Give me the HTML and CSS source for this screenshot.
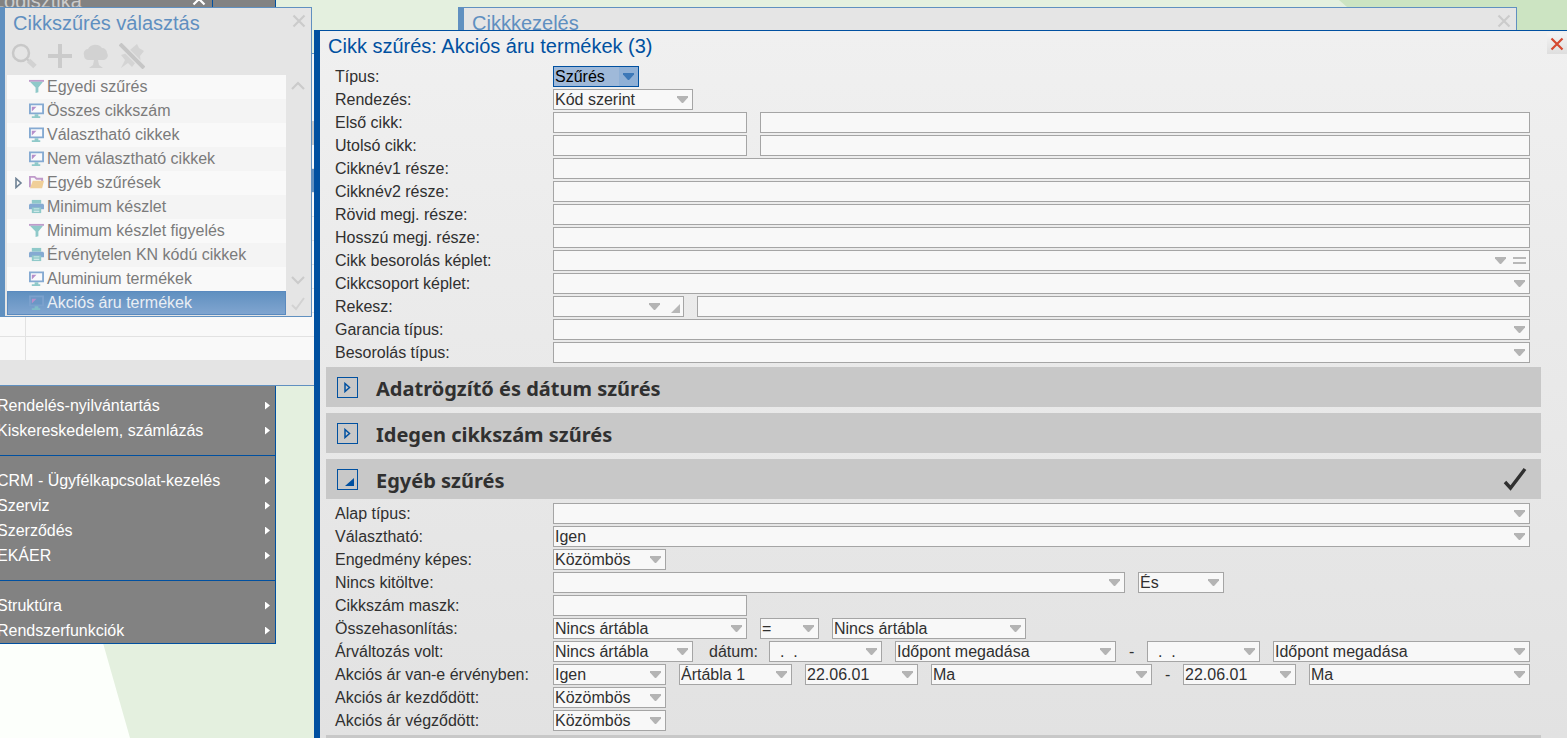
FILE: index.html
```html
<!DOCTYPE html>
<html lang="hu">
<head>
<meta charset="utf-8">
<title>Cikk szűrés</title>
<link rel="stylesheet" href="styles.css">
</head>
<body>
<svg class="defs" aria-hidden="true">
  <symbol id="cross" viewBox="0 0 14 14"><path d="M1.5 1.5L12.5 12.5M12.5 1.5L1.5 12.5" fill="none" stroke="currentColor" stroke-width="2.2"/></symbol>
  <symbol id="funnel" viewBox="0 0 16 16"><path d="M0 1h16v2H0z" fill="#bf9bcb"/><path d="M1 3h14L10 9v5l-3 1V9z" fill="#8fc9c9"/></symbol>
  <symbol id="screen" viewBox="0 0 16 16"><path d="M1 1.500h14v9.500H1z" fill="#f9f9fb" stroke="#85aad2" stroke-width="2"/><path d="M3 4h5L3 9z" fill="#b58fcb"/><path d="M6 12h4v2h2v2H3v-2h3z" fill="#8fc9c9"/></symbol>
  <symbol id="screen-sel" viewBox="0 0 16 16"><path d="M1 1.500h14v9.500H1z" fill="#6b97c5" stroke="#7ba1cd" stroke-width="2"/><path d="M3 4h5L3 9z" fill="#b58fcb"/><path d="M6 12h4v2h2v2H3v-2h3z" fill="#7fbcc9"/></symbol>
  <symbol id="folder" viewBox="0 0 16 16"><path d="M1 13V2h5l2 2h6v3" fill="none" stroke="#c09bca" stroke-width="2"/><path d="M4 6h12l-2 8H1z" fill="#f0cf98"/></symbol>
  <symbol id="printer" viewBox="0 0 16 16"><path d="M3 1h10v4H3z" fill="#8fc9c9"/><path d="M1 5h14l1 1v5H0V6z" fill="#85aad2"/><path d="M3 9h10v6H3z" fill="#8fc9c9"/><path d="M5 10h6v1H5zM5 12.500h6v1H5z" fill="#e2f2f2"/></symbol>
</svg>
<div class="desktop">
  <div class="shape shape-white"></div>
  <div class="shape shape-green"></div>

  <nav class="menu">
    <div class="menu-head"><span>Logisztika</span><span class="menu-close"><svg width="14" height="14"><use href="#cross"/></svg></span></div>
    <ul><li><a href="#">Rendelés-nyilvántartás</a></li><li><a href="#">Kiskereskedelem, számlázás</a></li></ul>
    <ul><li><a href="#">CRM - Ügyfélkapcsolat-kezelés</a></li><li><a href="#">Szerviz</a></li><li><a href="#">Szerződés</a></li><li><a href="#">EKÁER</a></li></ul>
    <ul><li><a href="#">Struktúra</a></li><li><a href="#">Rendszerfunkciók</a></li></ul>
  </nav>

  <section class="backgrid">
    <div class="backgrid-title"></div><div class="backgrid-head"></div>
    <div class="backgrid-rows"><div class="backgrid-selected"></div></div>
  </section>

  <section class="window items">
    <header class="window-title"><h2>Cikkkezelés</h2><button class="close" aria-label="Bezárás"><svg width="14" height="14"><use href="#cross"/></svg></button></header>
  </section>

  <section class="window picker">
    <header class="window-title"><h2>Cikkszűrés választás</h2><button class="close" aria-label="Bezárás"><svg width="14" height="14"><use href="#cross"/></svg></button></header>
    <div class="tools">
      <button aria-label="Keresés"><svg width="26" height="26" viewBox="0 0 26 26"><circle cx="10" cy="10" r="8" fill="none" stroke="#c8c8c8" stroke-width="2.500"/><path d="M15 15l3 3" stroke="#c8c8c8" stroke-width="2"/><path d="M17.500 17.500l6.500 6" stroke="#d2d2d2" stroke-width="5"/></svg></button>
      <button aria-label="Új"><svg width="26" height="26" viewBox="0 0 26 26"><path d="M13 1v24M1 13h24" stroke="#cbcbcb" stroke-width="4"/></svg></button>
      <button aria-label="Fa"><svg width="26" height="26" viewBox="0 0 26 26"><path d="M5 17a5 5 0 01-4-5 4.500 4.500 0 014-6 8 7 0 0114-1 5 5 0 015 5 4.500 4.500 0 01-3 7h-6l1 5 4 3H6l4-3 1-5z" fill="#d2d2d2"/></svg></button>
      <button aria-label="Rögzítés törlése"><svg width="26" height="26" viewBox="0 0 26 26"><path d="M12 6l6-5 2 4 5 3-4 5 1 7-5-1-4 5-4-4-7 5 4-8-4-5 6-2z" fill="#d4d4d4"/><path d="M2 2l22 22" stroke="#e5e5e5" stroke-width="6"/><path d="M1 1l24 24" stroke="#c6c6c6" stroke-width="4"/></svg></button>
    </div>
    <div class="picker-body">
      <ul class="tree">
        <li><svg><use href="#funnel"/></svg>Egyedi szűrés</li>
        <li><svg><use href="#screen"/></svg>Összes cikkszám</li>
        <li><svg><use href="#screen"/></svg>Választható cikkek</li>
        <li><svg><use href="#screen"/></svg>Nem választható cikkek</li>
        <li class="branch"><svg class="expander" viewBox="0 0 8 12"><path d="M1 1.500v9L6 6z" fill="#f9f9f9" stroke="#6f8295" stroke-width="1.600"/></svg><svg><use href="#folder"/></svg>Egyéb szűrések</li>
        <li><svg><use href="#printer"/></svg>Minimum készlet</li>
        <li><svg><use href="#funnel"/></svg>Minimum készlet figyelés</li>
        <li><svg><use href="#printer"/></svg>Érvénytelen KN kódú cikkek</li>
        <li><svg><use href="#screen"/></svg>Aluminium termékek</li>
        <li class="selected"><svg><use href="#screen-sel"/></svg>Akciós áru termékek</li>
      </ul>
      <div class="scroll">
        <button aria-label="Fel"><svg width="14" height="9" viewBox="0 0 14 9"><path d="M1 8l6-6 6 6" fill="none" stroke="#cbcbcb" stroke-width="2.200"/></svg></button>
        <span class="scroll-end">
        <button aria-label="Le"><svg width="14" height="9" viewBox="0 0 14 9"><path d="M1 1l6 6 6-6" fill="none" stroke="#cbcbcb" stroke-width="2.200"/></svg></button>
        <button aria-label="Kiválaszt"><svg width="14" height="14" viewBox="0 0 14 14"><path d="M1 8l4 4 8-11" fill="none" stroke="#d2d2d2" stroke-width="2"/></svg></button>
        </span>
      </div>
    </div>
  </section>

  <main class="window filter">
    <header class="window-title"><h1>Cikk szűrés: Akciós áru termékek (3)</h1><button class="close" aria-label="Bezárás"><svg width="14" height="14"><use href="#cross"/></svg></button></header>
    <form>
      <div class="rows">
        <div class="row"><label for="tipus">Típus:</label><span class="combo w-s focused"><select id="tipus"><option>Szűrés</option></select></span></div>
        <div class="row"><label for="rend">Rendezés:</label><span class="combo w-l"><select id="rend"><option>Kód szerint</option></select></span></div>
        <div class="row"><label for="elso">Első cikk:</label><input id="elso" class="w-xl"><input class="grow" aria-label="Első cikk neve"></div>
        <div class="row"><label for="utolso">Utolsó cikk:</label><input id="utolso" class="w-xl"><input class="grow" aria-label="Utolsó cikk neve"></div>
        <div class="row"><label for="nev1">Cikknév1 része:</label><input id="nev1" class="grow"></div>
        <div class="row"><label for="nev2">Cikknév2 része:</label><input id="nev2" class="grow"></div>
        <div class="row"><label for="rovid">Rövid megj. része:</label><input id="rovid" class="grow"></div>
        <div class="row"><label for="hosszu">Hosszú megj. része:</label><input id="hosszu" class="grow"></div>
        <div class="row"><label for="besk">Cikk besorolás képlet:</label><span class="combo grow extra"><input id="besk"><svg class="mark" width="13" height="7" viewBox="0 0 13 7"><path d="M0 1h13M0 6h13" stroke="#b8b8b8" stroke-width="2"/></svg></span></div>
        <div class="row"><label for="csop">Cikkcsoport képlet:</label><span class="combo grow"><input id="csop"></span></div>
        <div class="row"><label for="rekesz">Rekesz:</label><span class="combo w-m extra corner"><input id="rekesz"><svg class="mark" width="9" height="9" viewBox="0 0 9 9"><path d="M9 0v9H0z" fill="#b8b8b8"/></svg></span><input class="grow" aria-label="Rekesz neve"></div>
        <div class="row"><label for="gar">Garancia típus:</label><span class="combo grow"><select id="gar"><option></option></select></span></div>
        <div class="row"><label for="best">Besorolás típus:</label><span class="combo grow"><select id="best"><option></option></select></span></div>
      </div>
      <div class="section"><button type="button" aria-label="Kinyit"><svg width="7" height="11" viewBox="0 0 7 11"><path d="M1 1.500v8L5.500 5.500z" fill="none" stroke="#0050a0" stroke-width="1.500"/></svg></button><h2>Adatrögzítő és dátum szűrés</h2></div>
      <div class="section"><button type="button" aria-label="Kinyit"><svg width="7" height="11" viewBox="0 0 7 11"><path d="M1 1.500v8L5.500 5.500z" fill="none" stroke="#0050a0" stroke-width="1.500"/></svg></button><h2>Idegen cikkszám szűrés</h2></div>
      <div class="section open"><button type="button" aria-label="Becsuk"><svg width="9" height="8" viewBox="0 0 9 8"><path d="M9 0v8H0z" fill="#0050a0"/></svg></button><h2>Egyéb szűrés</h2><svg class="tick" width="24" height="24" viewBox="0 0 24 24"><path d="M2 15L7.500 21L22 2" fill="none" stroke="#303030" stroke-width="3.400"/></svg></div>
      <div class="rows">
        <div class="row"><label for="alap">Alap típus:</label><span class="combo grow"><select id="alap"><option></option></select></span></div>
        <div class="row"><label for="val">Választható:</label><span class="combo grow"><select id="val"><option>Igen</option></select></span></div>
        <div class="row"><label for="eng">Engedmény képes:</label><span class="combo w-c"><select id="eng"><option>Közömbös</option></select></span></div>
        <div class="row"><label for="nincs">Nincs kitöltve:</label><span class="combo w-half"><select id="nincs"><option></option></select></span><span class="combo w-s"><select aria-label="Kapcsolat"><option>És</option></select></span></div>
        <div class="row"><label for="maszk">Cikkszám maszk:</label><input id="maszk" class="w-xl"></div>
        <div class="row"><label for="ossz">Összehasonlítás:</label><span class="combo w-xl"><select id="ossz"><option>Nincs ártábla</option></select></span><span class="combo w-xs"><select aria-label="Művelet"><option>=</option></select></span><span class="combo w-xl"><select aria-label="Másik ártábla"><option>Nincs ártábla</option></select></span></div>
        <div class="row"><label for="arv">Árváltozás volt:</label><span class="combo w-l"><select id="arv"><option>Nincs ártábla</option></select></span><label class="inner" for="datum">dátum:</label><span class="combo w-c"><input id="datum" value="  .  ."></span><span class="combo w-t"><select aria-label="Kezdő időpont"><option>Időpont megadása</option></select></span><span class="dash">-</span><span class="combo w-c"><input aria-label="Záró dátum" value="  .  ."></span><span class="combo grow"><select aria-label="Záró időpont"><option>Időpont megadása</option></select></span></div>
        <div class="row"><label for="akc">Akciós ár van-e érvényben:</label><span class="combo w-c"><select id="akc"><option>Igen</option></select></span><span class="combo w-c"><select aria-label="Ártábla"><option>Ártábla 1</option></select></span><span class="combo w-c"><input aria-label="Akció kezdete" value="22.06.01"></span><span class="combo w-t"><select aria-label="Akció kezdő időpont"><option>Ma</option></select></span><span class="dash">-</span><span class="combo w-c"><input aria-label="Akció vége" value="22.06.01"></span><span class="combo grow"><select aria-label="Akció záró időpont"><option>Ma</option></select></span></div>
        <div class="row"><label for="kezd">Akciós ár kezdődött:</label><span class="combo w-c"><select id="kezd"><option>Közömbös</option></select></span></div>
        <div class="row"><label for="vegz">Akciós ár végződött:</label><span class="combo w-c"><select id="vegz"><option>Közömbös</option></select></span></div>
      </div>
      <div class="section"></div>
    </form>
  </main>
</div>
</body>
</html>
```

FILE: styles.css
```css
* { box-sizing: border-box; }
html, body { margin: 0; height: 100%; }
body, input, select, button { font-family: "Liberation Sans", Arial, sans-serif; font-size: 16px; }
body { color: #303030; }
h1, h2, ul { margin: 0; padding: 0; font-weight: normal; list-style: none; }
button { padding: 0; border: 0; background: none; }
svg { display: block; }
.defs { position: absolute; width: 0; height: 0; }

.desktop { position: relative; height: 100vh; overflow: hidden; background: #e4f0df; }
.shape { position: absolute; inset: 0; }
.shape-white { background: #fcfffb; clip-path: polygon(0 0, 0 738px, 130px 738px, 103px 643px, 0 280px); }
.shape-green { background: #cce4c2; clip-path: polygon(1339px 0, 100% 0, 100% 200px, 1567px 200px); }

/* Main menu */
.menu { position: absolute; left: -12px; top: -12px; width: 288px; background: #828282; color: #fff; border: 1px solid #0050a0; border-top: 0; }
.menu-head { display: flex; height: 405px; padding-left: 4px; font-size: 20px; line-height: 26px; color: #ccc; }
.menu-head span:first-child { width: 190px; }
.menu-close { width: 30px; height: 24px; padding: 4px 0 0 9px; border-right: 1px solid #0050a0; color: #fff; }
.menu ul + ul { margin-top: 12px; padding-top: 12px; border-top: 1px solid #0050a0; }
.menu a { display: flex; align-items: center; justify-content: space-between; height: 25px; padding: 0 5px 0 8px; color: inherit; text-decoration: none; }
.menu a::after { content: ""; width: 5px; height: 8px; background: #fff; clip-path: polygon(0 0, 100% 50%, 0 100%); }

/* Grid window at the back */
.backgrid { position: absolute; left: 0; top: 53px; width: 330px; height: 333px; display: flex; flex-direction: column; background: #e4e4e4; border: solid #6090c0; border-width: 1px 0; }
.backgrid-title { height: 67px; background: #f4f4f4; }
.backgrid-head { height: 24px; background: #c8c8c8; }
.backgrid-rows { height: 215px; padding-top: 24px; background: linear-gradient(90deg, transparent 25px, #e2e2e2 25px, #e2e2e2 26px, transparent 26px), repeating-linear-gradient(#f9f9f9 0 23px, #e2e2e2 23px 24px); }
.backgrid-selected { height: 23px; background: #6090c0; }

/* Windows */
.window { position: absolute; border: 1px solid #6090c0; background: #e5e5e5; }
.window-title { display: flex; justify-content: space-between; }
.window-title h1, .window-title h2 { font-size: 20px; line-height: 30px; color: #5f8fc0; }
.close { display: grid; place-items: center; width: 20px; height: 21px; color: #cbcbcb; }
.items { left: 458px; right: 50px; top: 7px; height: 200px; border-left-width: 6px; }
.items h2 { padding-left: 8px; }
.items .close { margin: 2px 2px 0 0; }

.picker { left: 0; top: 7px; width: 312px; border-left-width: 5px; padding: 0 2px 1px 2px; }
.picker h2 { padding-left: 6px; }
.picker .close { margin: 2px 0 0 0; }
.tools { display: flex; align-items: flex-start; gap: 10px; height: 37px; padding: 5px 0 0 4px; }
.picker-body { display: flex; }
.tree { flex: 1; color: #7b7b7b; }
.tree li { display: flex; align-items: center; gap: 3px; height: 24px; padding-left: 22px; background: #f9f9f9; line-height: 22px; }
.tree li:nth-child(even) { background: #f4f4f4; }
.tree svg { width: 15px; height: 15px; margin-bottom: 1px; }
.tree .branch { padding-left: 8px; }
.tree .expander { width: 8px; height: 12px; margin-right: 3px; }
.tree .selected:last-child { padding-left: 21px; border: 1px solid #5a8abf; background: linear-gradient(#6090c0, #80a5d0); color: #e9eef4; }
.scroll { display: flex; flex-direction: column; justify-content: space-between; padding: 6px 4px 4px 5px; }
.scroll button { display: block; }
.scroll-end { display: grid; gap: 12px; }

.filter { left: 314px; right: 0; top: 30px; bottom: 0; overflow: hidden; border: solid #0050a0; border-width: 1px 0 0 6px; background: linear-gradient(#f0f0f0, #e2e2e2); }
.filter h1 { padding-left: 8px; color: #0050a0; }
.filter .window-title { height: 31px; }
.filter .close { margin-top: 2px; background: linear-gradient(#f4f4f4, #dedede); color: #d5482f; }

/* Form rows */
.rows { display: grid; gap: 2px; padding: 4px 37px 4px 15px; }
.row { display: flex; gap: 13px; height: 21px; line-height: 21px; }
.row > label:first-child { flex: none; width: 205px; white-space: nowrap; }
.row .inner { flex: none; width: 50px; padding-left: 3px; }
.dash { flex: none; width: 5px; }
.row input, .row select { height: 21px; min-width: 0; margin: 0; padding: 0 1px; border: 1px solid #a5a5a5; border-radius: 0; background: #f8f8f8; color: #303030; appearance: none; outline: 0; }
.combo { display: block; position: relative; min-width: 0; }
.combo input, .combo select { display: block; width: 100%; }
.combo::after { content: ""; position: absolute; right: 5px; top: 7px; width: 11px; height: 7px; background: #b4b4b4; clip-path: polygon(0 0, 100% 0, 100% 20%, 55% 100%, 45% 100%, 0 20%); pointer-events: none; }
.extra::after { right: 24px; }
.mark { position: absolute; right: 4px; top: 7px; }
.corner .mark { top: 8px; }
.row .focused select { border-color: #0050a0; background: linear-gradient(90deg, #9fb9d9 65px, #8fb0d6 65px); color: #000; }
.focused::after { background: #3c78b8; }
.grow { flex: 1; }
.w-xs { width: 59px; }
.w-s { width: 86px; }
.w-c { width: 113px; }
.w-m { width: 131px; }
.w-l { width: 140px; }
.w-xl { width: 194px; }
.w-t { width: 221px; }
.w-half { width: 572px; }

/* Collapsible sections */
.section { display: flex; align-items: center; height: 40px; margin: 0 26px 0 6px; padding: 0 14px 0 11px; background: #c8c8c8; }
.section + .section { margin-top: 6px; }
.section button { display: grid; place-items: center; width: 21px; height: 21px; border: 1px solid #0050a0; }
.section.open button { place-items: end; padding: 0 3px 3px 0; }
.section h2 { flex: 1; padding: 3px 0 0 18px; font: bold 20px/28px "Noto Sans", "Open Sans", sans-serif; }
```
